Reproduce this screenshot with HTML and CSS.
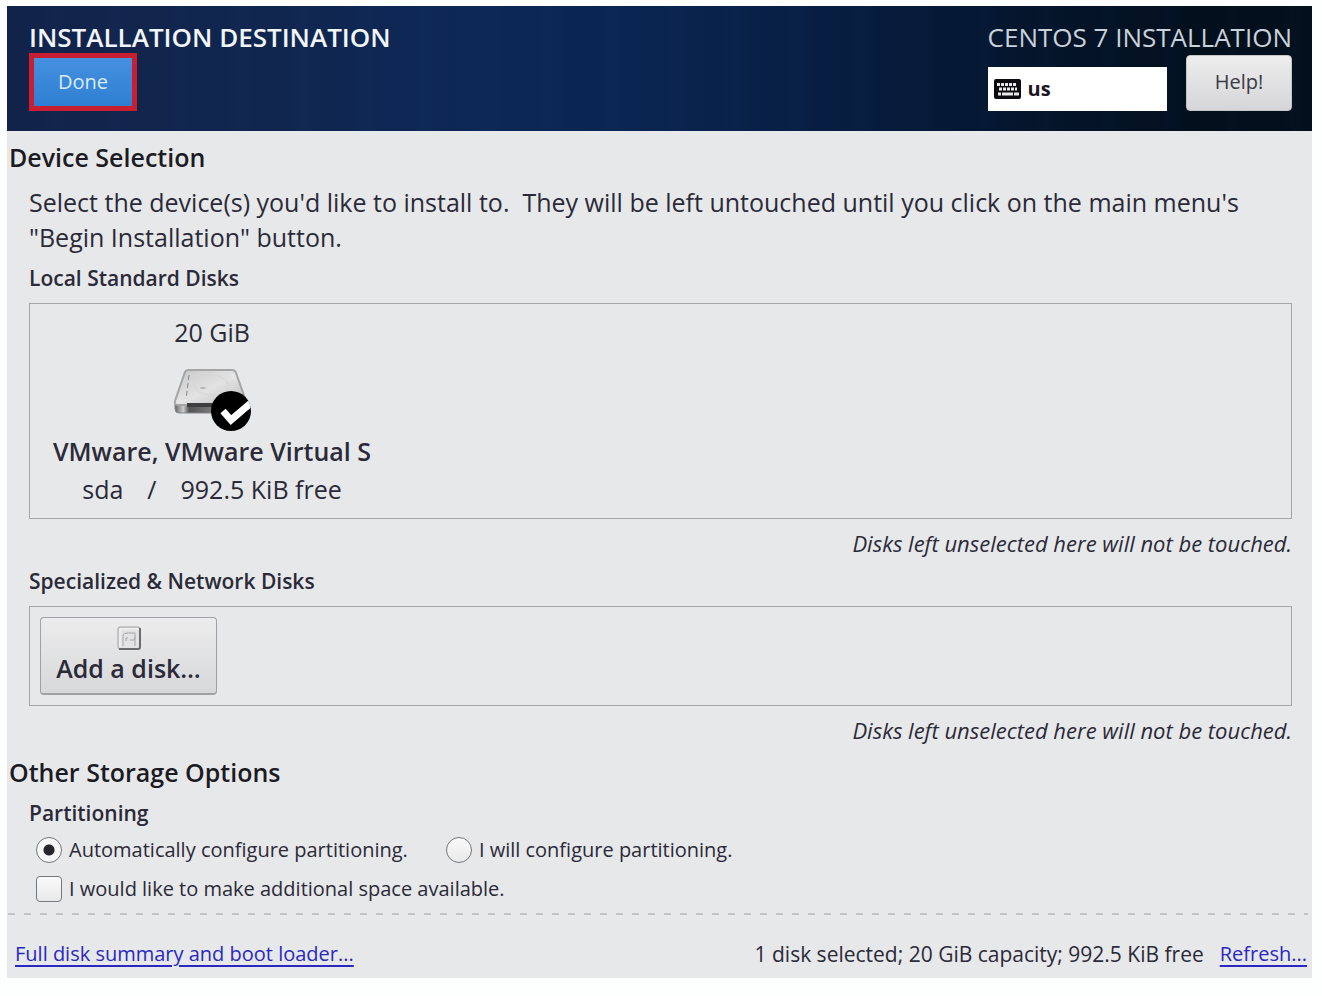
FILE: index.html
```html
<!DOCTYPE html>
<html lang="en">
<head>
	<meta charset="utf-8">
	<title>Installation Destination</title>
	<link rel="stylesheet" href="styles.css">
</head>
<body>
	<div id="spoke">
		<header id="topbar">
			<div class="left">
				<h1>INSTALLATION DESTINATION</h1>
				<button type="button" class="done">Done</button>
			</div>
			<div class="right">
				<p class="product">CENTOS 7 INSTALLATION</p>
				<div class="tools">
					<div class="layout">
						<svg width="27" height="20" viewBox="0 0 27 20">
							<rect width="27" height="20" rx="2" fill="#0d0a12"/>
							<g fill="none" stroke="#e8e8ea" stroke-width="3">
								<path d="M3 5.500h19" stroke-dasharray="3 1"/>
								<path d="M5 10h18" stroke-dasharray="3 1"/>
								<path d="M4 15h3m1 0h11m1 0h5" stroke-width="3"/>
							</g>
						</svg>
						<span>us</span>
					</div>
					<button type="button" class="help">Help!</button>
				</div>
			</div>
		</header>

		<main>
			<h2>Device Selection</h2>
			<section>
				<p class="intro">Select the device(s) you'd like to install to.&nbsp; They will be left untouched until you click on the main menu's "Begin Installation" button.</p>
				<h3>Local Standard Disks</h3>
				<div class="disks local">
					<div class="disk">
						<p class="size">20 GiB</p>
						<svg width="78" height="66" viewBox="0 0 78 66">
							<defs>
								<linearGradient id="metal" x1="0" y1="0" x2="1" y2="1">
									<stop offset="0" stop-color="#c4c4c5"/>
									<stop offset=".5" stop-color="#e6e6e7"/>
									<stop offset="1" stop-color="#b5b5b6"/>
								</linearGradient>
								<linearGradient id="plate" x1="0" y1="0" x2="1" y2="1">
									<stop offset="0" stop-color="#cfcfd0"/>
									<stop offset=".5" stop-color="#e2e2e3"/>
									<stop offset="1" stop-color="#c6c6c7"/>
								</linearGradient>
								<linearGradient id="edge" x1="0" x2="1">
									<stop offset="0" stop-color="#666"/>
									<stop offset=".12" stop-color="#ccc"/>
									<stop offset=".2" stop-color="#555"/>
									<stop offset="1" stop-color="#aaa"/>
								</linearGradient>
							</defs>
							<path d="M2 37v6q0 4 4 4h62q4 0 4-4v-6z" fill="url(#edge)" stroke="#858586"/>
							<path d="M15 4h44q3 0 4 3l10 28q1 4-3 4H5q-4 0-3-4L12 6q1-2 3-2z" fill="url(#metal)" stroke="#a5a5a6" stroke-width="2"/>
							<path d="M17 7h40l10 28H14z" fill="url(#plate)"/>
							<path d="M16 9l-3 24" stroke="#858586" stroke-dasharray="5 3"/>
							<ellipse cx="38" cy="19" rx="17" ry="10" fill="none" stroke="#d6d6d7"/>
							<ellipse cx="30" cy="22" rx="3" ry="1" fill="#b5b5b6"/>
							<path d="M14 39h26" stroke="#3e3e40" stroke-width="4"/>
							<circle cx="58" cy="45" r="20"/>
							<clipPath id="badge"><circle cx="58" cy="45" r="20"/></clipPath>
							<path d="M50 45l8 9 20-17" fill="none" stroke="#fff" stroke-width="7" clip-path="url(#badge)"/>
						</svg>
						<p class="name">VMware, VMware Virtual S</p>
						<p class="free"><span>sda</span><span>/</span><span>992.5 KiB free</span></p>
					</div>
				</div>
				<p class="note">Disks left unselected here will not be touched.</p>

				<h3>Specialized &amp; Network Disks</h3>
				<div class="disks network">
					<button type="button" class="add">
						<svg width="24" height="24" viewBox="0 0 24 24">
							<rect x="1" y="1" width="22" height="22" rx="2" fill="#e3e3e4" stroke="#a0a0a3"/>
							<path d="M2 23h19q2 0 2-2V2" fill="none" stroke="#6c6c70" stroke-width="2"/>
							<path d="M3 21V3h18" fill="none" stroke="#f6f6f6"/>
							<path d="M6 20V9q1-2 5-2h7v13M9 15v-3h2m2 2h4l1-3" fill="none" stroke="#a5a5a8"/>
						</svg>
						Add a disk…
					</button>
				</div>
				<p class="note">Disks left unselected here will not be touched.</p>
			</section>

			<h2>Other Storage Options</h2>
			<section class="options">
				<h3>Partitioning</h3>
				<div class="row">
					<label><input type="radio" name="part" checked>Automatically configure partitioning.</label>
					<label><input type="radio" name="part">I will configure partitioning.</label>
				</div>
				<div class="row">
					<label><input type="checkbox">I would like to make additional space available.</label>
				</div>
			</section>
		</main>

		<div class="divider"></div>
		<footer>
			<a href="#">Full disk summary and boot loader...</a>
			<p>1 disk selected; 20 GiB capacity; 992.5 KiB free</p>
			<a href="#">Refresh...</a>
		</footer>
	</div>
</body>
</html>
```
FILE: styles.css
```css
*{
	margin: 0;
	padding: 0;
	box-sizing: border-box;
}
body{
	padding: 6px 10px 18px 7px;
	background: #fdfefe;
	font-family: "Open Sans", "Noto Sans", sans-serif;
	font-size: 20px;
	line-height: 32px;
	color: #2b2a38;
}
button, input{
	font: inherit;
	color: inherit;
}
h1, h2, h3{
	font-weight: 600;
}
svg{
	display: block;
}
#spoke{
	background: #e7e8ea;
}

/* top bar */
#topbar{
	display: flex;
	justify-content: space-between;
	height: 125px;
	padding: 15px 20px 0 22px;
	background:
		repeating-linear-gradient(90deg, rgba(40,90,160,0) 0 34px, rgba(40,90,160,0.03) 46px 50px, rgba(40,90,160,0) 62px),
		linear-gradient(90deg, #12234a 0, #10264f 20%, #0d2756 36%, #0a2450 50%, #071d3f 65%, #04142a 80%, #020f1c 92%);
	color: #f2f5fa;
}
#topbar h1{
	font-size: 26px;
	line-height: 32px;
}
.done{
	width: 108px;
	height: 58px;
	border: 5px solid #c81e30;
	background: linear-gradient(#4690e0, #2e7fd2);
	color: #d9eafc;
}
.product{
	font-size: 26px;
	color: #c9d1da;
}
.tools{
	display: flex;
	justify-content: space-between;
	align-items: flex-start;
}
.layout{
	display: flex;
	align-items: center;
	gap: 7px;
	width: 179px;
	height: 44px;
	margin-top: 14px;
	padding-left: 6px;
	background: #fff;
	color: #1c1622;
	font-weight: 700;
}
.help{
	width: 106px;
	height: 56px;
	padding-bottom: 2px;
	margin-top: 2px;
	border: 1px solid #c4c5c7;
	border-radius: 4px;
	background: linear-gradient(#ededee, #d6d6d8);
	color: #3a3946;
}

/* disks */
h2{
	padding: 8px 2px 0;
	font-size: 25px;
	line-height: 36px;
	color: #1c1b24;
}
section{
	padding: 0 20px 0 22px;
}
h3{
	margin-bottom: 3px;
	font-size: 21px;
	line-height: 44px;
}
.intro{
	padding: 10px 0 1px;
	font-size: 25px;
	line-height: 35px;
}
.disks{
	padding: 10px;
	border: 1px solid #a5a6a9;
}
.disk{
	display: flex;
	flex-direction: column;
	align-items: center;
	width: 344px;
	font-size: 25px;
	line-height: 38px;
}
.size{
	line-height: 36px;
}
.disk svg{
	margin-top: 16px;
}
.name{
	font-weight: 600;
}
.free{
	display: flex;
	gap: 24px;
}
.note{
	padding-top: 8px;
	font-size: 22px;
	text-align: right;
	font-style: italic;
}
.add{
	display: flex;
	flex-direction: column;
	align-items: center;
	gap: 2px;
	width: 177px;
	height: 78px;
	padding-top: 8px;
	border: 1px solid #a0a1a4;
	border-bottom-width: 2px;
	border-radius: 4px;
	background: linear-gradient(#ececed, #d7d8d9);
	font-size: 25px;
	font-weight: 600;
}

/* options */
.options h3{
	padding-top: 6px;
	margin-bottom: 0;
	line-height: 34px;
}
.row{
	display: flex;
	gap: 38px;
	padding-left: 7px;
	line-height: 39px;
}
.row label{
	display: flex;
	align-items: center;
	gap: 7px;
}
.row input{
	appearance: none;
	width: 26px;
	height: 26px;
	border: 1px solid #77787c;
	border-radius: 4px;
	background: linear-gradient(#fafafa, #e9e9ea);
}
.row input[type=radio]{
	border-radius: 50%;
}
.row input[type=radio]:checked{
	background: radial-gradient(circle, #26252c 0 5px, #f6f6f6 6px);
}
.divider{
	height: 2px;
	margin: 5px 4px 0 1px;
	background: repeating-linear-gradient(90deg, #c3c4c7 0 7px, transparent 7px 16px);
}
footer{
	display: flex;
	gap: 16px;
	padding: 23px 5px 8px 8px;
}
footer p{
	margin-left: auto;
	font-size: 21px;
}
footer a{
	color: #2a28c0;
	text-underline-offset: 4px;
}
```
